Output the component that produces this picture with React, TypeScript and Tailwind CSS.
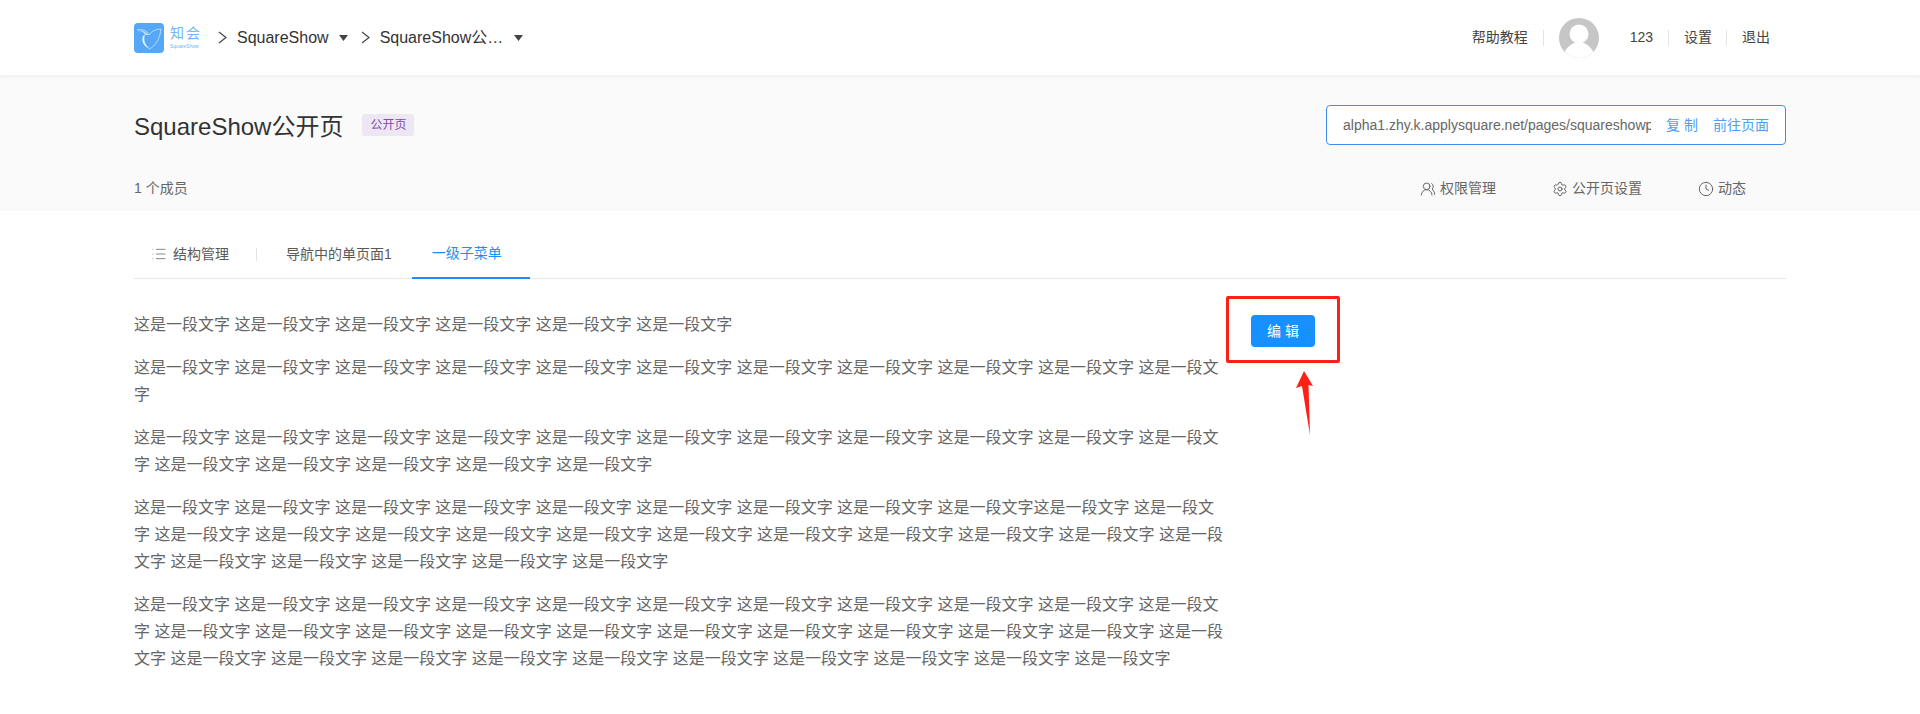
import React from 'react';
import { Clock, List, Settings, UsersRound } from 'lucide-react';

const PHRASE = '这是一段文字';
const rep = (n: number) => Array(n).fill(PHRASE).join(' ');

const paragraphs = [
  rep(6),
  rep(11),
  rep(16),
  rep(8) + ' ' + PHRASE + PHRASE + ' ' + rep(17),
  rep(32),
];

// logo, a leaf outline on a blue tile
const Logo = () => (
  <svg width="30" height="30" viewBox="0 0 30 30" className="shrink-0">
    <rect width="30" height="30" rx="4" fill="#56a8f6" />
    <path d="M3 7c5-1 10 0 12 5 2-3 6-6 12-6-1 9-5 17-12 20" fill="none" stroke="#fff" strokeOpacity="0.55" strokeWidth="1" />
    <path d="M3 7c4 1 7 2 8 5 2 0 3 0 4 0-4-4-8-5-12-5z" fill="#fff" fillOpacity="0.6" />
    <path d="M11 12c-2 5 0 10 5 14-6-2-9-8-7-13z" fill="#fff" fillOpacity="0.9" />
  </svg>
);

const Caret = () => (
  <svg width="9" height="6" viewBox="0 0 9 6" className="ml-[10px]">
    <path d="M0 0h9L4.500 6z" fill="#444" />
  </svg>
);

const Chevron = () => (
  <svg width="9" height="13" viewBox="0 0 9 13">
    <path d="M1 1l7 5.500-7 5.500" fill="none" stroke="#444" strokeWidth="1.2" />
  </svg>
);

const Divider = () => <div className="h-4 w-px bg-[#e4e4e4]" />;

const Avatar = () => (
  <svg width="40" height="40" viewBox="0 0 40 40">
    <defs>
      <clipPath id="av">
        <circle cx="20" cy="20" r="20" />
      </clipPath>
    </defs>
    <g clipPath="url(#av)">
      <rect width="40" height="40" fill="#c6c6c6" />
      <circle cx="20" cy="16" r="9.500" fill="#fff" />
      <path d="M4 40c1-9 7-13 11-15h10c4 2 10 6 11 15z" fill="#fff" />
    </g>
  </svg>
);

const Header = () => (
  <header className="relative z-10 flex h-[75px] items-center justify-between bg-white pl-[134px] pr-[150px] shadow-[0_1px_4px_rgba(0,0,0,0.06)]">
    <div className="flex items-center text-[#333]">
      <Logo />
      <div className="ml-[6px] flex w-[30px] flex-col items-start leading-none text-[#6fb5f7]">
        <span className="whitespace-nowrap text-[14px] tracking-[2px] leading-[16px]">知会</span>
        <span className="mt-[2px] whitespace-nowrap text-[5px] leading-[7px]">SquareShow</span>
      </div>
      <div className="ml-[18px]"><Chevron /></div>
      <span className="ml-[10px] text-[16px]">SquareShow</span>
      <Caret />
      <div className="ml-[13px]"><Chevron /></div>
      <span className="ml-[10px] w-[124px] truncate text-[16px]">SquareShow公开页</span>
      <Caret />
    </div>
    <div className="flex items-center text-[14px] text-[#444]">
      <span>帮助教程</span>
      <div className="ml-[15px]"><Divider /></div>
      <div className="ml-[15px]"><Avatar /></div>
      <span className="ml-[31px]">123</span>
      <div className="ml-[15px]"><Divider /></div>
      <span className="ml-[15px]">设置</span>
      <div className="ml-[14px]"><Divider /></div>
      <span className="ml-[15px]">退出</span>
    </div>
  </header>
);

const PageInfo = () => (
  <section className="h-[136px] bg-[#fafafa] px-[134px]">
    <div className="flex h-[40px] items-start justify-between">
      <div className="mt-[30px] flex items-start">
        <h1 className="mt-[4px] text-[24px] leading-[36px] text-[#333]">SquareShow公开页</h1>
        <span className="ml-[19px] mt-[9px] flex h-[22px] w-[52px] items-center justify-center rounded-[3px] bg-[#ede7f3] text-[12px] text-[#7b4fa3]">公开页</span>
      </div>
      <div className="mt-[30px] flex h-[40px] w-[460px] items-center rounded-[4px] border border-[#3b8fe8] bg-white pl-[16px] text-[14px]">
        <span className="w-[308px] overflow-hidden whitespace-nowrap text-[#666]">alpha1.zhy.k.applysquare.net/pages/squareshowpublic</span>
        <span className="ml-[15px] text-[#4a9ff5]">复 制</span>
        <span className="ml-[15px] text-[#4a9ff5]">前往页面</span>
      </div>
    </div>
    <div className="mt-[63px] flex items-center justify-between text-[14px] text-[#666]">
      <span>1 个成员</span>
      <div className="flex items-center pr-[40px]">
        <span className="flex items-center gap-[4px]"><UsersRound size={16} strokeWidth={1.5} />权限管理</span>
        <span className="ml-[56px] flex items-center gap-[4px]"><Settings size={16} strokeWidth={1.5} />公开页设置</span>
        <span className="ml-[56px] flex items-center gap-[4px]"><Clock size={16} strokeWidth={1.5} />动态</span>
      </div>
    </div>
  </section>
);

const Tabs = () => (
  <nav className="mx-[134px] mt-[16px] flex h-[52px] items-stretch border-b border-[#e8e8e8] pt-[3px] text-[14px] text-[#595959]">
    <div className="flex items-center gap-[6px] pl-[17px] pr-[27px]">
      <List size={16} strokeWidth={1.5} className="text-[#888]" />
      <span>结构管理</span>
    </div>
    <div className="my-auto h-[13px] w-px bg-[#e4e4e4]" />
    <div className="flex items-center pl-[29px] pr-[20px]">导航中的单页面1</div>
    <div className="-mb-px flex items-center border-b-2 border-[#1890ff] pl-[20px] pr-[28px] text-[#1890ff]">一级子菜单</div>
  </nav>
);

const App: React.FC = () => {
  return (
    <div className="h-[714px] overflow-hidden bg-white font-['Liberation_Sans','Noto_Sans_CJK_SC',sans-serif]">
      <Header />
      <PageInfo />
      <Tabs />
      <main className="flex px-[134px] pt-[32px]">
        <div className="w-[1092px] text-[16px] leading-[27px] text-[#666]">
          {paragraphs.map((text, i) => (
            <p key={i} className="mb-[16px]">{text}</p>
          ))}
        </div>
        <div className="relative ml-[25px] mt-[4px] h-[32px]">
          <button className="h-[32px] w-[64px] rounded-[4px] bg-[#1890ff] text-[14px] text-white">编 辑</button>
          {/* red annotation drawn on top of the screenshot */}
          <div className="absolute left-[-25px] top-[-19px] h-[67px] w-[114px] rounded-[2px] border-[3px] border-[#ff2015]" />
          <svg className="absolute left-[44px] top-[56px]" width="20" height="66" viewBox="0 0 20 66">
            <path d="M9 0L18 15 13.500 14 15 64 7 15 1 17z" fill="#ff2015" />
          </svg>
        </div>
      </main>
    </div>
  );
};

export default App;
